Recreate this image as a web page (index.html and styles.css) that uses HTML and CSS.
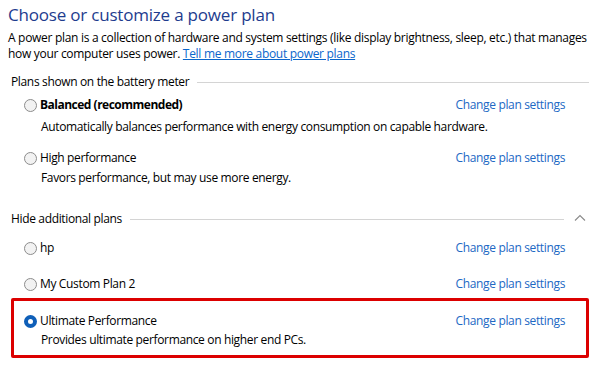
FILE: index.html
```html
<!DOCTYPE html>
<html>
<head>
<meta charset="utf-8">
<link rel="stylesheet" href="styles.css">
</head>
<body>
<div class="page">
  <h1 class="title">Choose or customize a power plan</h1>
  <p class="intro">A power plan is a collection of hardware and system settings (like display brightness, sleep, etc.) that manages<br>how your computer uses power. <a class="link" href="#">Tell me more about power plans</a></p>

  <div class="section-head section-battery"><span class="section-label">Plans shown on the battery meter</span><span class="section-rule"></span></div>

  <div class="plan plan-balanced">
    <div class="plan-row">
      <label class="plan-name bold"><span class="radio"></span>Balanced (recommended)</label>
      <a class="plan-link" href="#">Change plan settings</a>
    </div>
    <div class="plan-desc desc-balanced">Automatically balances performance with energy consumption on capable hardware.</div>
  </div>

  <div class="plan plan-high">
    <div class="plan-row">
      <label class="plan-name"><span class="radio"></span>High performance</label>
      <a class="plan-link" href="#">Change plan settings</a>
    </div>
    <div class="plan-desc desc-high">Favors performance, but may use more energy.</div>
  </div>

  <div class="section-head section-hide"><span class="section-label">Hide additional plans</span><span class="section-rule rule-short"></span><span class="chevron"><svg width="12" height="8" viewBox="0 0 12 8"><path d="M1 6.5 L6 1.5 L11 6.5" fill="none" stroke="#8a8a8a" stroke-width="1.1"/></svg></span></div>

  <div class="plan plan-hp">
    <div class="plan-row">
      <label class="plan-name"><span class="radio"></span>hp</label>
      <a class="plan-link" href="#">Change plan settings</a>
    </div>
  </div>

  <div class="plan plan-custom">
    <div class="plan-row">
      <label class="plan-name"><span class="radio"></span>My Custom Plan 2</label>
      <a class="plan-link" href="#">Change plan settings</a>
    </div>
  </div>

  <div class="plan plan-ultimate selected">
    <div class="plan-row">
      <label class="plan-name"><span class="radio radio-on"></span>Ultimate Performance</label>
      <a class="plan-link" href="#">Change plan settings</a>
    </div>
    <div class="plan-desc desc-ultimate">Provides ultimate performance on higher end PCs.</div>
  </div>
</div>
</body>
</html>
```

FILE: styles.css
```css
html, body {
  margin: 0;
  padding: 0;
  background: #ffffff;
}

body {
  font-family: "Open Sans", "Noto Sans", sans-serif;
  font-size: 12px;
  color: #000000;
  width: 614px;
  height: 368px;
  overflow: hidden;
}

.page {
  padding-top: 4px;
  padding-left: 8px;
  width: 581px;
}

.title {
  margin: 0;
  font-size: 17px;
  font-weight: 400;
  line-height: 22px;
  color: #1e3c8e;
  letter-spacing: -0.2px;
}

.intro {
  margin: 4px 0 0 0;
  line-height: 16px;
  letter-spacing: -0.3px;
  white-space: nowrap;
}

.link {
  color: #0a66cc;
  text-decoration: underline;
}

.section-head {
  display: flex;
  align-items: center;
  height: 16px;
  line-height: 16px;
  margin-left: 3px;
}

.section-battery {
  margin-top: 12px;
}

.section-hide {
  margin-top: 25px;
}

.section-label {
  letter-spacing: -0.35px;
  white-space: nowrap;
}

.section-rule {
  flex: 1;
  height: 1px;
  background: #d4d4d4;
  margin-left: 8px;
  margin-right: 0;
}

.rule-short {
  margin-right: 10px;
}

.chevron {
  width: 12px;
  height: 8px;
  display: flex;
  margin-top: -3px;
  margin-right: 3px;
}

.plan {
  margin-left: 16px;
  width: 542px;
}

.plan-balanced { margin-top: 7px; }
.plan-high { margin-top: 15px; }
.plan-hp { margin-top: 13px; }
.plan-custom { margin-top: 20px; }

.plan-row {
  display: flex;
  justify-content: space-between;
  align-items: center;
  height: 16px;
  line-height: 16px;
}

.plan-name {
  display: flex;
  align-items: center;
  letter-spacing: -0.35px;
  white-space: nowrap;
}

.bold {
  font-weight: 700;
  letter-spacing: -0.5px;
}

.radio {
  width: 11px;
  height: 11px;
  border: 1px solid #8c8c8c;
  border-radius: 50%;
  background: #f2f2f2;
  margin-right: 3px;
  flex: none;
}

.radio-on {
  width: 5px;
  height: 5px;
  border: 4px solid #0f5fb8;
  background: #ffffff;
}

.plan-link {
  color: #2168c4;
  text-decoration: none;
  letter-spacing: -0.35px;
  white-space: nowrap;
  margin-right: 1px;
}

.plan-desc {
  line-height: 16px;
  padding-left: 17px;
  letter-spacing: -0.35px;
  white-space: nowrap;
}

.desc-balanced { margin-top: 6px; }
.desc-high { margin-top: 4px; }
.desc-ultimate { margin-top: 3px; }

.selected {
  margin-top: 6px;
  margin-left: 3px;
  border: 3px solid #dc0000;
  border-radius: 2px;
  padding: 12px 20px 7px 10px;
}
```
